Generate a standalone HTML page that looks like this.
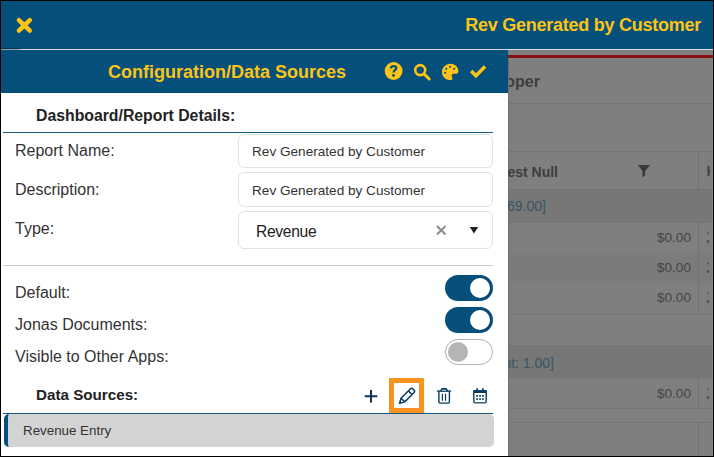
<!DOCTYPE html>
<html><head><meta charset="utf-8">
<style>
*{margin:0;padding:0;box-sizing:border-box}
html,body{width:714px;height:457px;overflow:hidden;background:#000}
body{position:relative;font-family:"Liberation Sans",sans-serif}
.a{position:absolute}
#frame{left:1px;top:1px;width:712px;height:455px;background:#7f7f7f;overflow:hidden}
#hdr{left:0;top:0;width:712px;height:48px;background:#04507a}
#hline{left:0;top:48px;width:712px;height:1px;background:#d9dde0}
.y{color:#fdc416;font-weight:bold}
.t{white-space:nowrap}
#panel{left:0;top:49px;width:507px;height:406px;background:#fff}
#phdr{left:0;top:0;width:507px;height:43px;background:#04507a}
.lbl{color:#333;font-size:16px}
.inp{border:1px solid #dfe2e6;border-radius:6px;background:#fff}
.tog{width:48px;height:26px;border-radius:13px;background:#04507a}
.knob{width:20px;height:20px;border-radius:50%;background:#fff;top:3px;left:25px}
.gl{background:#737373}
</style></head><body>
<div id="frame" class="a">
  <!-- background grid (under overlay) -->
  <div class="a" style="left:0;top:54px;width:712px;height:3px;background:#8a1111"></div>
  <div class="a t" style="right:173px;top:72px;font-size:16px;font-weight:bold;color:#3d3d3d;text-align:right">Developer</div>
  <div class="a gl" style="left:507px;top:102px;width:205px;height:1px"></div>
  <div class="a gl" style="left:507px;top:150px;width:205px;height:1px"></div>
  <div class="a gl" style="left:507px;top:188px;width:205px;height:1px"></div>
  <div class="a" style="left:507px;top:57px;width:1px;height:398px;background:#6e6e6e"></div>
  <div class="a" style="left:508px;top:189px;width:204px;height:32px;background:#777"></div>
  <div class="a" style="left:508px;top:252px;width:204px;height:30px;background:#7a7b7a"></div>
  <div class="a" style="left:508px;top:344px;width:204px;height:32px;background:#777"></div>
  <div class="a gl" style="left:507px;top:221px;width:205px;height:1px"></div>
  <div class="a gl" style="left:507px;top:313px;width:205px;height:1px"></div>
  <div class="a gl" style="left:507px;top:344px;width:205px;height:1px"></div>
  <div class="a gl" style="left:507px;top:376px;width:205px;height:1px"></div>
  <div class="a gl" style="left:507px;top:407px;width:205px;height:1px"></div>
  <div class="a gl" style="left:507px;top:421px;width:205px;height:1px"></div>
  <div class="a gl" style="left:697px;top:150px;width:1px;height:39px"></div>
  <div class="a gl" style="left:697px;top:221px;width:1px;height:93px"></div>
  <div class="a gl" style="left:697px;top:377px;width:1px;height:31px"></div>
  <div class="a gl" style="left:697px;top:422px;width:1px;height:33px"></div>
  <div class="a" style="left:711px;top:57px;width:1px;height:398px;background:#858585"></div>
  <div class="a t" style="right:155px;top:163px;font-size:14px;font-weight:bold;color:#3d3d3d">Interest Null</div>
  <div class="a t" style="right:167px;top:197px;font-size:14px;color:#3a5463">[Total: 1,169.00]</div>
  <div class="a t" style="right:159px;top:354px;font-size:14px;color:#3a5463">[Amount: 1.00]</div>
  <div class="a t" style="right:22px;top:229px;font-size:13.6px;color:#444">$0.00</div>
  <div class="a t" style="right:22px;top:259px;font-size:13.6px;color:#444">$0.00</div>
  <div class="a t" style="right:22px;top:289px;font-size:13.6px;color:#444">$0.00</div>
  <div class="a t" style="right:22px;top:385px;font-size:13.6px;color:#444">$0.00</div>
  
  <!-- top header -->
  <div id="hdr" class="a">
        <div class="a y t" style="right:12px;top:14px;font-size:18px;letter-spacing:-0.25px">Rev Generated by Customer</div>
  </div>
  <div id="hline" class="a"></div>
  <div class="a" style="left:0;top:48px;width:22px;height:1px;background:linear-gradient(to right,#9a9c9e 0,#9a9c9e 16px,rgba(154,156,158,0) 22px)"></div>
  <div class="a" style="left:0;top:47px;width:22px;height:1px;background:linear-gradient(to right,rgba(0,0,0,.35) 0,rgba(0,0,0,.35) 16px,rgba(0,0,0,0) 22px)"></div>

  <!-- panel -->
  <div id="panel" class="a">
    <div id="phdr" class="a">
      <div class="a y t" style="left:107px;top:12px;font-size:18px">Configuration/Data Sources</div>
    </div>
    <div class="a t" style="left:35px;top:57px;font-size:15.8px;font-weight:bold;color:#222">Dashboard/Report Details:</div>
    <div class="a" style="left:2px;top:82px;width:490px;height:1px;background:#1a5a82"></div>

    <div class="a t lbl" style="left:14px;top:92px">Report Name:</div>
    <div class="a inp" style="left:237px;top:84px;width:255px;height:34px"></div>
    <div class="a t" style="left:251px;top:94px;font-size:13.6px;color:#333">Rev Generated by Customer</div>

    <div class="a t lbl" style="left:14px;top:131px">Description:</div>
    <div class="a inp" style="left:237px;top:122px;width:255px;height:35px"></div>
    <div class="a t" style="left:251px;top:133px;font-size:13.6px;color:#333">Rev Generated by Customer</div>

    <div class="a t lbl" style="left:14px;top:170px">Type:</div>
    <div class="a inp" style="left:237px;top:161px;width:255px;height:38px"></div>
    <div class="a t" style="left:255px;top:173px;font-size:15.6px;letter-spacing:-0.3px;color:#222">Revenue</div>

    <div class="a" style="left:2px;top:215px;width:490px;height:1px;background:#ccc"></div>

    <div class="a t lbl" style="left:14px;top:234px">Default:</div>
    <div class="a t lbl" style="left:14px;top:266px">Jonas Documents:</div>
    <div class="a t lbl" style="left:14px;top:298px">Visible to Other Apps:</div>
    <div class="a tog" style="left:444px;top:225px"><div class="a knob"></div></div>
    <div class="a tog" style="left:444px;top:257px"><div class="a knob"></div></div>
    <div class="a tog" style="left:444px;top:289px;background:#fff;border:1px solid #b0b0b0"><div class="a knob" style="left:2px;top:2px;background:#b5b5b5"></div></div>

    <div class="a t" style="left:35px;top:336px;font-size:15.2px;font-weight:bold;color:#222">Data Sources:</div>
    <div class="a" style="left:388px;top:328px;width:35px;height:35px;border:5px solid #f7931e"></div>
    <div class="a" style="left:2px;top:363px;width:490px;height:1px;background:#1a5a82"></div>
    <div class="a" style="left:3px;top:364px;width:490px;height:33px;background:#d3d3d3;border-radius:5px;border-left:4px solid #04507a"></div>
    <div class="a t" style="left:22px;top:373px;font-size:13.35px;color:#333">Revenue Entry</div>
  </div>
</div>

<svg class="a" style="left:0;top:0" width="714" height="457" viewBox="0 0 714 457">
  <g stroke="#fdc416" fill="none">
    <path d="M18.9 20.1 L29.8 30.6 M29.8 20.1 L18.9 30.6" stroke-width="4.4" stroke-linecap="round"/>
  </g>
  <circle cx="393.6" cy="71" r="8.9" fill="#fdc416"/>
  <path d="M390.9 68.6 C390.9 66.9 392.2 66.1 393.6 66.1 C395.2 66.1 396.3 67.1 396.3 68.3 C396.3 69.6 395.2 70.1 394.3 70.6 C393.7 71 393.6 71.4 393.6 72.6" stroke="#04507a" stroke-width="2.2" fill="none"/>
  <circle cx="393.5" cy="75.4" r="1.35" fill="#04507a"/>
  <circle cx="420.2" cy="70.1" r="5" stroke="#fdc416" stroke-width="2.6" fill="none"/>
  <path d="M424.2 74.2 L429.2 79" stroke="#fdc416" stroke-width="3" stroke-linecap="round"/>
  <path d="M450.2 63.7 C455 63.7 458.4 67.2 458.4 71 C458.4 73.2 457 73.8 455.3 73.8 L453.8 73.8 C452.2 73.8 451.3 75 451.8 76.4 C452.1 77.4 452.4 78 452.4 78.6 C452.4 79.6 451.6 80.1 450.2 80.1 C445.6 80.1 442 76.4 442 71.9 C442 67.4 445.6 63.7 450.2 63.7 Z" fill="#fdc416"/>
  <g fill="#04507a"><circle cx="450.2" cy="66.7" r="1.05"/><circle cx="446.2" cy="68.8" r="1.05"/><circle cx="454.2" cy="68.8" r="1.05"/><circle cx="445.1" cy="72.8" r="1.05"/></g>
  <path d="M471.2 71.1 L475.9 75.7 L485 66.6" stroke="#fdc416" stroke-width="3.5" fill="none" stroke-linecap="butt" stroke-linejoin="miter"/>
  <path d="M371 390 V402.6 M364.7 396.3 H377.3" stroke="#0f3457" stroke-width="2.1"/>
  <g transform="translate(399.6 403.3) rotate(-45)" stroke="#0a3c62" stroke-width="1.5" fill="none" stroke-linejoin="round">
    <path d="M0 0 L4.6 -2.6 L17.6 -2.6 Q19.6 -2.6 19.6 -0.6 L19.6 0.6 Q19.6 2.6 17.6 2.6 L4.6 2.6 Z M4.6 -2.6 L4.6 2.6 M15 -2.6 L15 2.6"/>
  </g>
  <g stroke="#0a3c60" fill="none">
    <path d="M437.1 391.1 H450.9" stroke-width="1.5"/>
    <path d="M440.6 391 L442.2 388.8 H446.1 L447.6 391" stroke-width="1.4" fill="#9aa9b5"/>
    <path d="M438.9 391.5 V402.1 Q438.9 403.1 439.9 403.1 H448.4 Q449.4 403.1 449.4 402.1 V391.5" stroke-width="1.4"/>
    <path d="M442.4 393.7 V400.7 M445.5 393.7 V400.7" stroke-width="1.2"/>
  </g>
  <g stroke="#0a3c60" fill="none">
    <rect x="473.8" y="390.8" width="12.4" height="12.1" rx="1.3" stroke-width="1.4"/>
    <path d="M477.1 388.1 V390.5 M482.9 388.1 V390.5" stroke-width="1.5"/>
  </g>
  <rect x="473.2" y="390.2" width="13.6" height="2.8" fill="#0a3c60"/>
  <g fill="#0a3c60">
    <rect x="476.2" y="395" width="1.7" height="1.7"/><rect x="479.2" y="395" width="1.7" height="1.7"/><rect x="482.1" y="395" width="1.7" height="1.7"/>
    <rect x="476.2" y="398.2" width="1.7" height="1.7"/><rect x="479.2" y="398.2" width="1.7" height="1.7"/><rect x="482.1" y="398.2" width="1.7" height="1.7"/>
  </g>
  <path d="M437 226 L445.5 234.5 M445.5 226 L437 234.5" stroke="#8c8c8c" stroke-width="2"/>
  <path d="M469.8 227 H478.2 L474 233.4 Z" fill="#222"/>
  <path d="M638 164.9 H650 L645.1 171 V175.5 L642.5 177.6 V171 Z" fill="#3a3a3a"/>
  <g fill="#3d3d3d"><rect x="707.6" y="165.8" width="1.8" height="10.2"/><rect x="709.2" y="169.8" width="0.9" height="2.6"/></g>
  <g fill="#4a4a4a"><rect x="707.3" y="232.5" width="1.4" height="1.6"/><rect x="707.3" y="240" width="1.8" height="3"/>
  <rect x="707.3" y="262.5" width="1.4" height="1.6"/><rect x="707.3" y="270" width="1.8" height="3"/>
  <rect x="707.3" y="292.5" width="1.4" height="1.6"/><rect x="707.3" y="300" width="1.8" height="3"/>
  <rect x="707.3" y="388.5" width="1.4" height="1.6"/><rect x="707.3" y="396" width="1.8" height="3"/></g>
</svg>
</body></html>
